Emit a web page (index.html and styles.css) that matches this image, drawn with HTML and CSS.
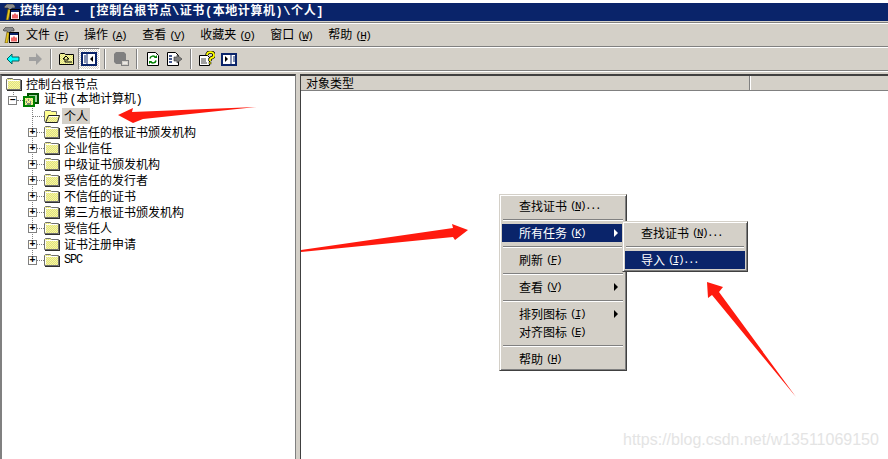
FILE: index.html
```html
<!DOCTYPE html>
<html lang="zh-CN">
<head>
    <meta charset="UTF-8">
    <meta name="viewport" content="width=device-width, initial-scale=1.0">
    <title>控制台1</title>
    <link rel="stylesheet" href="styles.css">
</head>
<body>

    <!-- shared icons -->
    <svg class="defs" width="0" height="0">
        <defs>
            <pattern id="dither" width="2" height="2" patternUnits="userSpaceOnUse">
                <rect width="2" height="2" fill="#ffff90"/>
                <rect width="1" height="1" fill="#d8d890"/>
                <rect x="1" y="1" width="1" height="1" fill="#d8d890"/>
            </pattern>
            <symbol id="folder" viewBox="0 0 16 14">
                <path d="M0.5 12.5V2.5l1-1h5l1 1h7v10z" fill="url(#dither)" stroke="#707070"/>
                <path d="M1.5 11.5V3.5h12" fill="none" stroke="#fff"/>
                <path d="M1 13.5h15M15.5 3v11" fill="none" stroke="#303030"/>
            </symbol>
            <symbol id="folder-open" viewBox="0 0 16 14">
                <path d="M0.5 12.5V2.5l1-1h5l1 1h5v3" fill="#ffff90" stroke="#707070"/>
                <path d="M1.5 13.5l3-7h11l-2 7z" fill="url(#dither)" stroke="#202020"/>
                <path d="M5 7.5h9" stroke="#fff"/>
            </symbol>
            <symbol id="cert" viewBox="0 0 16 14">
                <rect x="5" y="1" width="10" height="9" fill="#a0d0a0" stroke="#005000" stroke-width="2"/>
                <rect x="1" y="4" width="10" height="9" fill="url(#dither)" stroke="#008000" stroke-width="2"/>
                <path d="M3 9h1M5 7h1M7 9h1M4 11h4" stroke="#0a246a"/>
            </symbol>
            <symbol id="snapin" viewBox="0 0 16 16">
                <path d="M0 3l3-3h6l2 2v2H8L6 7 4 4H1z" fill="#8c8c8c" stroke="#303030" stroke-width="0.6"/>
                <path d="M4 5l2.5 1L4.5 16H2z" fill="#e8c820" stroke="#604800" stroke-width="0.6"/>
                <rect x="6.5" y="5.5" width="9" height="10" fill="#fff" stroke="#000"/>
                <rect x="7" y="6" width="8" height="2" fill="#0a246a"/>
                <path d="M9 14.5v-4M11 14.5v-5M13 14.5v-4" stroke="#e00000" stroke-width="1.2"/>
            </symbol>
        </defs>
    </svg>

    <div class="titlebar">
        <svg class="ico16 title-ico"><use href="#snapin"/></svg>
        <span class="title-text">控制台1 - [控制台根节点\证书(本地计算机)\个人]</span>
    </div>

    <div class="band menubar">
        <svg class="ico16 menu-ico"><use href="#snapin"/></svg>
        <span class="menu-top">文件<span class="key">(<u>F</u>)</span></span>
        <span class="menu-top">操作<span class="key">(<u>A</u>)</span></span>
        <span class="menu-top">查看<span class="key">(<u>V</u>)</span></span>
        <span class="menu-top">收藏夹<span class="key">(<u>O</u>)</span></span>
        <span class="menu-top">窗口<span class="key">(<u>W</u>)</span></span>
        <span class="menu-top">帮助<span class="key">(<u>H</u>)</span></span>
    </div>

    <div class="band toolbar">
        <div class="tool">
            <svg class="ico16" viewBox="0 0 16 16"><path d="M2 8l5-5v3h7v4H7v3z" fill="#00ffff" stroke="#006060"/></svg>
        </div>
        <div class="tool">
            <svg class="ico16" viewBox="0 0 16 16"><path d="M15 8l-6-6v4H2v4h7v4z" fill="#a0a0a0"/></svg>
        </div>
        <div class="tool-sep"></div>
        <div class="tool">
            <svg class="ico16" viewBox="0 0 16 16"><path d="M0.5 13.5v-10l1-1h4l1 1h8v10z" fill="url(#dither)" stroke="#000"/><path d="M7 5L4 8h2v3h7M7 5l3 3H8v2" fill="none" stroke="#000"/></svg>
        </div>
        <div class="tool tool-on">
            <svg class="ico16" viewBox="0 0 16 16"><rect x="1" y="2" width="14" height="12" fill="#fff" stroke="#0a246a" stroke-width="2"/><path d="M6 2v12" stroke="#0a246a"/><path d="M3 5h2M3 7h2M3 9h2M3 11h2" stroke="#0a246a"/><path d="M12 5v6L9 8z" fill="#000"/></svg>
        </div>
        <div class="tool-sep"></div>
        <div class="tool">
            <svg class="ico16" viewBox="0 0 16 16"><path d="M1 3l2-2h8l2 2v8l-2 2H3l-2-2z" fill="#808080"/><rect x="8.5" y="9.5" width="7" height="5" fill="#d4d0c8" stroke="#808080"/><path d="M10 12h4" stroke="#fff"/></svg>
        </div>
        <div class="tool-sep"></div>
        <div class="tool">
            <svg class="ico16" viewBox="0 0 16 16"><path d="M2.5 1.5h8l3 3v10h-11z" fill="#fff" stroke="#000"/><path d="M5 7.5a3 3 0 0 1 5.5-1M11 9.5a3 3 0 0 1-5.5 1" fill="none" stroke="#008000" stroke-width="1.5"/><path d="M9 7h3V4zM7 10H4v3z" fill="#008000"/></svg>
        </div>
        <div class="tool">
            <svg class="ico16" viewBox="0 0 16 16"><path d="M0.5 1.5h8l3 3v10h-11z" fill="#fff" stroke="#000"/><path d="M2 5h3M2 8h3M2 11h3" stroke="#0a246a" stroke-width="1.5"/><path d="M7 6h3V4l5 4-5 4v-2H7z" fill="#808080" stroke="#303030" stroke-width="0.6"/></svg>
        </div>
        <div class="tool-sep"></div>
        <div class="tool">
            <svg class="ico16" viewBox="0 0 16 16"><path d="M0.5 4.5h8l2 2v8h-10z" fill="#fff" stroke="#000"/><path d="M2 8h5M2 10h5M2 12h6" stroke="#404040"/><path d="M8 4a3.5 3 0 1 1 4 3l-1 1v2" fill="none" stroke="#000" stroke-width="3.4"/><path d="M8 4a3.5 3 0 1 1 4 3l-1 1v2" fill="none" stroke="#ffff00" stroke-width="1.8"/><rect x="10" y="11" width="2" height="2" fill="#ffff00" stroke="#000" stroke-width="0.5"/></svg>
        </div>
        <div class="tool">
            <svg class="ico16" viewBox="0 0 16 16"><rect x="1" y="3" width="14" height="11" fill="#fff" stroke="#0a246a" stroke-width="2"/><path d="M10 3v11" stroke="#0a246a"/><path d="M12 6h2M12 8h2M12 10h2" stroke="#0a246a"/><path d="M4 5v6l3-3z" fill="#000"/></svg>
        </div>
    </div>

    <div class="workspace">
        <div class="tree">
            <div class="row row-root">
                <svg class="ico-folder"><use href="#folder"/></svg>
                <span class="label">控制台根节点</span>
            </div>
            <div class="row row-store">
                <span class="exp">&minus;</span>
                <span class="twig"></span>
                <svg class="ico-folder"><use href="#cert"/></svg>
                <span class="label label-store">证书 (本地计算机)</span>
            </div>
            <div class="branch">
                <div class="row">
                    <span class="twig twig-leaf"></span>
                    <svg class="ico-folder"><use href="#folder-open"/></svg>
                    <span class="label label-sel">个人</span>
                </div>
                <div class="row"><span class="exp">+</span><span class="twig"></span><svg class="ico-folder"><use href="#folder"/></svg><span class="label">受信任的根证书颁发机构</span></div>
                <div class="row"><span class="exp">+</span><span class="twig"></span><svg class="ico-folder"><use href="#folder"/></svg><span class="label">企业信任</span></div>
                <div class="row"><span class="exp">+</span><span class="twig"></span><svg class="ico-folder"><use href="#folder"/></svg><span class="label">中级证书颁发机构</span></div>
                <div class="row"><span class="exp">+</span><span class="twig"></span><svg class="ico-folder"><use href="#folder"/></svg><span class="label">受信任的发行者</span></div>
                <div class="row"><span class="exp">+</span><span class="twig"></span><svg class="ico-folder"><use href="#folder"/></svg><span class="label">不信任的证书</span></div>
                <div class="row"><span class="exp">+</span><span class="twig"></span><svg class="ico-folder"><use href="#folder"/></svg><span class="label">第三方根证书颁发机构</span></div>
                <div class="row"><span class="exp">+</span><span class="twig"></span><svg class="ico-folder"><use href="#folder"/></svg><span class="label">受信任人</span></div>
                <div class="row"><span class="exp">+</span><span class="twig"></span><svg class="ico-folder"><use href="#folder"/></svg><span class="label">证书注册申请</span></div>
                <div class="row"><span class="exp">+</span><span class="twig"></span><svg class="ico-folder"><use href="#folder"/></svg><span class="label label-en">SPC</span></div>
            </div>
        </div>
        <div class="list">
            <div class="list-head">
                <div class="col col-type">对象类型</div>
                <div class="col col-rest"></div>
            </div>
        </div>
    </div>

    <!-- context menu -->
    <div class="popup menu-main">
        <div class="item">查找证书<span class="key">(<u>N</u>)...</span></div>
        <div class="divider"></div>
        <div class="item item-on">所有任务<span class="key">(<u>K</u>)</span><i class="more"></i></div>
        <div class="divider"></div>
        <div class="item">刷新<span class="key">(<u>F</u>)</span></div>
        <div class="divider"></div>
        <div class="item">查看<span class="key">(<u>V</u>)</span><i class="more"></i></div>
        <div class="divider"></div>
        <div class="item">排列图标<span class="key">(<u>I</u>)</span><i class="more"></i></div>
        <div class="item">对齐图标<span class="key">(<u>E</u>)</span></div>
        <div class="divider"></div>
        <div class="item">帮助<span class="key">(<u>H</u>)</span></div>

        <div class="popup menu-sub">
            <div class="item">查找证书<span class="key">(<u>N</u>)...</span></div>
            <div class="divider"></div>
            <div class="item item-on">导入<span class="key">(<u>I</u>)...</span></div>
        </div>
    </div>

    <!-- red arrows drawn on top of the screenshot -->
    <svg class="marks" viewBox="0 0 888 459">
        <path d="M118 115L133 108 132 112 256 107 143 119 133 123z"/>
        <path d="M301 250L453 228 452 224 468 230 455 240 453 237 301 252z"/>
        <path d="M707 282L723 287 719 292 796 397 712 295 708 298z"/>
    </svg>

    <div class="watermark">https://blog.csdn.net/w13511069150</div>

</body>
</html>
```

FILE: styles.css
```css
body {
    margin: 0;
    width: 888px;
    height: 459px;
    overflow: hidden;
    position: relative;
    display: flex;
    flex-direction: column;
    background-color: #fff;
    color: #000;
    font-family: "Noto Sans CJK SC", "Liberation Sans", sans-serif;
    font-size: 12px;
    line-height: 16px;
}

.defs {
    position: absolute;
}

.ico16 {
    width: 16px;
    height: 16px;
    flex: none;
}

/* Title bar */
.titlebar {
    height: 18px;
    margin-top: 3px;
    margin-bottom: 2px;
    display: flex;
    align-items: center;
    background-color: #0a246a;
    color: #fff;
    font-weight: bold;
    box-shadow: 0 1px #d4d0c8, 0 2px #808080;
    flex: none;
}

.title-ico {
    margin: 0 0 0 4px;
}

.title-text {
    font-family: "Liberation Mono", "Noto Sans CJK SC", monospace;
    letter-spacing: 0.57px;
    white-space: pre;
}

/* Menu bar and toolbar */
.band {
    height: 22px;
    display: flex;
    align-items: center;
    background-color: #d4d0c8;
    border-top: 1px solid #fff;
    border-bottom: 1px solid #808080;
    flex: none;
}

.menu-ico {
    margin: 0 7px 0 3px;
}

.menu-top {
    margin-right: 16px;
    white-space: nowrap;
}

.key {
    font-family: "Liberation Mono", monospace;
    font-size: 11px;
    letter-spacing: -1.6px;
    margin-left: 3px;
}

.toolbar {
    padding-left: 2px;
}

.tool {
    width: 22px;
    height: 22px;
    display: flex;
    align-items: center;
    justify-content: center;
}

.tool-on {
    box-sizing: border-box;
    border: 1px solid;
    border-color: #808080 #fff #fff #808080;
    background-color: #fff;
    background-image: conic-gradient(#d4d0c8 25%, #fff 0 50%, #d4d0c8 0 75%, #fff 0);
    background-size: 2px 2px;
}

.tool-sep {
    width: 10px;
    height: 20px;
    display: flex;
    background: linear-gradient(#808080, #808080) 4px 0 / 1px 100% no-repeat,
                linear-gradient(#fff, #fff) 5px 0 / 1px 100% no-repeat;
}

/* Main area */
.workspace {
    flex: 1;
    min-height: 0;
    display: flex;
    gap: 4px;
    padding-top: 2px;
    background-color: #d4d0c8;
    border-top: 1px solid #fff;
}

.tree {
    box-sizing: border-box;
    width: 296px;
    background-color: #fff;
    border-style: solid;
    border-width: 2px 1px 0 2px;
    border-color: #404040 #808080 #fff #808080;
}

.row {
    height: 16px;
    display: flex;
    align-items: center;
    white-space: nowrap;
}

.row-root {
    padding-left: 4px;
}

.row-root .label {
    margin-left: 4px;
}

.row-store {
    padding-left: 6px;
    background: repeating-linear-gradient(#808080 0 1px, transparent 1px 2px) 11px 0 / 1px 4px no-repeat;
}

.branch {
    padding-left: 26px;
    background: repeating-linear-gradient(#808080 0 1px, transparent 1px 2px) 30px 0 / 1px calc(100% - 8px) no-repeat;
}

.exp {
    box-sizing: border-box;
    width: 9px;
    height: 9px;
    flex: none;
    display: flex;
    align-items: center;
    justify-content: center;
    border: 1px solid #808080;
    background-color: #fff;
    font-family: "Liberation Mono", monospace;
    font-size: 10px;
    font-weight: bold;
    line-height: 7px;
}

.twig {
    width: 7px;
    height: 0;
    flex: none;
    border-top: 1px dotted #808080;
}

.row-store .twig {
    width: 6px;
}

.twig-leaf {
    width: 12px;
    margin-left: 4px;
}

.ico-folder {
    width: 16px;
    height: 14px;
    flex: none;
}

.label {
    margin-left: 4px;
    line-height: 14px;
}

.label-store {
    margin-left: 5px;
    font-family: "Liberation Mono", "Noto Sans CJK SC", monospace;
    letter-spacing: -0.2px;
    word-spacing: -5px;
}

.label-sel {
    margin-left: 2px;
    padding: 1px 2px;
    background-color: #d4d0c8;
}

.label-en {
    font-family: "Liberation Mono", monospace;
    font-size: 12px;
    letter-spacing: -1.2px;
}

.list {
    flex: 1;
    min-width: 0;
    background-color: #fff;
    border-left: 1px solid #404040;
    border-top: 2px solid #404040;
}

.list-head {
    height: 14px;
    display: flex;
    background-color: #d4d0c8;
    border-bottom: 1px solid #808080;
}

.col {
    line-height: 14px;
}

.col-type {
    width: 443px;
    padding-left: 5px;
    border-right: 1px solid #808080;
}

.col-rest {
    flex: 1;
    border-left: 1px solid #fff;
}

/* Context menus */
.popup {
    position: absolute;
    box-sizing: border-box;
    padding: 2px;
    background-color: #d4d0c8;
    border: 1px solid;
    border-color: #d4d0c8 #404040 #404040 #d4d0c8;
    box-shadow: inset 1px 1px #fff, inset -1px -1px #808080;
}

.menu-main {
    left: 499px;
    top: 194px;
    width: 128px;
    height: 177px;
}

.menu-sub {
    left: 122px;
    top: 26px;
    width: 126px;
    height: 51px;
}

.item {
    height: 18px;
    line-height: 18px;
    padding-left: 17px;
    display: flex;
    align-items: center;
    white-space: nowrap;
}

.menu-sub .item {
    padding-left: 16px;
}

.item-on {
    background-color: #0a246a;
    color: #fff;
}

.divider {
    height: 9px;
    box-sizing: border-box;
    margin: 0 1px;
    border-top: 4px solid transparent;
    border-bottom: 3px solid transparent;
    background-clip: padding-box;
    background-image: linear-gradient(#808080 50%, #fff 50%);
}

.more {
    margin-left: auto;
    margin-right: 6px;
    width: 0;
    height: 0;
    border-left: 4px solid currentColor;
    border-top: 4px solid transparent;
    border-bottom: 4px solid transparent;
}

/* Overlays */
.marks {
    position: absolute;
    left: 0;
    top: 0;
    width: 888px;
    height: 459px;
    pointer-events: none;
    fill: #ff1a0e;
}

.watermark {
    position: absolute;
    left: 623px;
    top: 430px;
    font-family: "Liberation Sans", sans-serif;
    font-size: 16px;
    line-height: 20px;
    color: #e4e4e4;
    white-space: nowrap;
}
```
